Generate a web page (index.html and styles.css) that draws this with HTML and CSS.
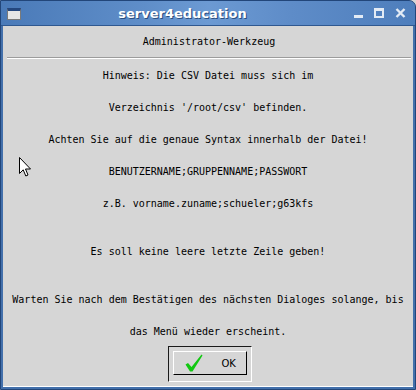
FILE: index.html
```html
<!DOCTYPE html>
<html lang="de">
<head>
    <meta charset="UTF-8">
    <meta name="viewport" content="width=device-width, initial-scale=1.0">
    <title>server4education</title>
    <link rel="stylesheet" href="styles.css">
</head>
<body>
    <div class="window">
        <div class="titlebar">
            <span class="win-icon"></span>
            <span class="title">server4education</span>
            <div class="controls">
                <span class="ctl-min"></span>
                <span class="ctl-max"></span>
                <svg class="ctl-close" width="11" height="10" viewBox="0 0 11 10">
                    <path d="M1.5 1 L9.5 9 M9.5 1 L1.5 9" stroke="#e3ebf5" stroke-width="2.4" fill="none"/>
                </svg>
            </div>
        </div>
        <div class="client">
            <div class="header">Administrator-Werkzeug</div>
            <div class="message">
                <p>Hinweis: Die CSV Datei muss sich im</p>
                <p>Verzeichnis '/root/csv' befinden.</p>
                <p>Achten Sie auf die genaue Syntax innerhalb der Datei!</p>
                <p>BENUTZERNAME;GRUPPENNAME;PASSWORT</p>
                <p>z.B. vorname.zuname;schueler;g63kfs</p>
                <p class="spaced">Es soll keine leere letzte Zeile geben!</p>
                <p class="spaced">Warten Sie nach dem Bestätigen des nächsten Dialoges solange, bis</p>
                <p>das Menü wieder erscheint.</p>
            </div>
            <div class="actions">
                <div class="button-well">
                    <button type="button" class="ok-button">
                        <svg class="check" width="18" height="18" viewBox="0 0 18 18">
                            <path d="M0.5 10.5 L3 9 L6.5 13 L16.5 0.5 L17.5 1.5 L7.5 17.5 L5 17.5 Z" fill="#12c812"/>
                        </svg>
                        <span>OK</span>
                    </button>
                </div>
            </div>
        </div>
        <svg class="cursor" width="13" height="21" viewBox="0 0 13 21">
            <path d="M0.5 0.5 L0.5 16.5 L4.2 12.8 L6.8 19 L9 18 L6.5 12 L11.5 12 Z" fill="#fff" stroke="#000" stroke-width="1"/>
        </svg>
    </div>
</body>
</html>
```

FILE: styles.css
```css
/* Dialog window */
body {
    margin: 0;
    background: #d6d6d6;
    font-family: "DejaVu Sans Mono", monospace;
}

.window {
    position: relative;
    width: 416px;
    height: 390px;
    box-sizing: border-box;
    background: #4370ab;
    border: 1px solid #22467a;
    border-top-right-radius: 7px;
    padding: 0 2px 2px 2px;
    display: flex;
    flex-direction: column;
}

.titlebar {
    height: 24px;
    margin: 0 -2px;
    display: flex;
    align-items: center;
    padding: 0 9px 0 6px;
    background: linear-gradient(to right, #4a7ab8 0%, #5f8ec9 35%, #6c9ad3 50%, #5e8cc8 70%, #4e7ebc 100%);
    border-top-right-radius: 6px;
    border-bottom: 1px solid #2f5890;
}

.win-icon {
    width: 12px;
    height: 8px;
    background: #e6e6e6;
    border: 1px solid #7a7a7a;
    border-top: 3px solid #24477e;
    margin-top: 1px;
}

.title {
    flex: 1;
    text-align: center;
    color: #fff;
    font-family: "DejaVu Sans", sans-serif;
    font-weight: bold;
    font-size: 13px;
    text-shadow: 1px 1px 0 #2c4f80;
    padding-right: 10px;
}

.controls {
    display: flex;
    align-items: center;
    gap: 11px;
}

.ctl-min {
    width: 9px;
    height: 3px;
    background: #e3ebf5;
    margin-top: 7px;
}

.ctl-max {
    width: 6px;
    height: 5px;
    border: 2px solid #e3ebf5;
    border-top-width: 3px;
}

.ctl-close {
    display: block;
}

.client {
    flex: 1;
    background: #d6d6d6;
    border-bottom: 1px solid #fff;
    display: flex;
    flex-direction: column;
    font-size: 10px;
    color: #000;
}

.header {
    margin: 0 2px 0 4px;
    padding: 8px 0 7px;
    line-height: 16px;
    text-align: center;
    border-bottom: 1px solid #9c9c9c;
    box-shadow: 0 1px 0 #fff;
}

.message {
    padding-top: 10px;
    text-align: center;
}

.message p {
    margin: 16px 0 0;
    line-height: 16px;
    white-space: nowrap;
}

.message p:first-child {
    margin-top: 0;
}

.message p.spaced {
    margin-top: 32px;
}

.actions {
    display: flex;
    justify-content: center;
    margin-top: 6px;
    padding-left: 3px;
}

.button-well {
    width: 84px;
    height: 36px;
    box-sizing: border-box;
    border: 1px solid;
    border-color: #1a1a1a #fff #fff #1a1a1a;
    padding: 4px;
}

.ok-button {
    width: 74px;
    height: 24px;
    box-sizing: border-box;
    margin: 0;
    padding: 0 0 0 11px;
    background: #d6d6d6;
    border: 1px solid;
    border-color: #fff #000 #000 #fff;
    display: flex;
    align-items: center;
    font-family: "DejaVu Sans", sans-serif;
    font-size: 10px;
    color: #000;
}

.check {
    display: block;
    margin-right: 19px;
}

.cursor {
    position: absolute;
    left: 18px;
    top: 156px;
}
```
